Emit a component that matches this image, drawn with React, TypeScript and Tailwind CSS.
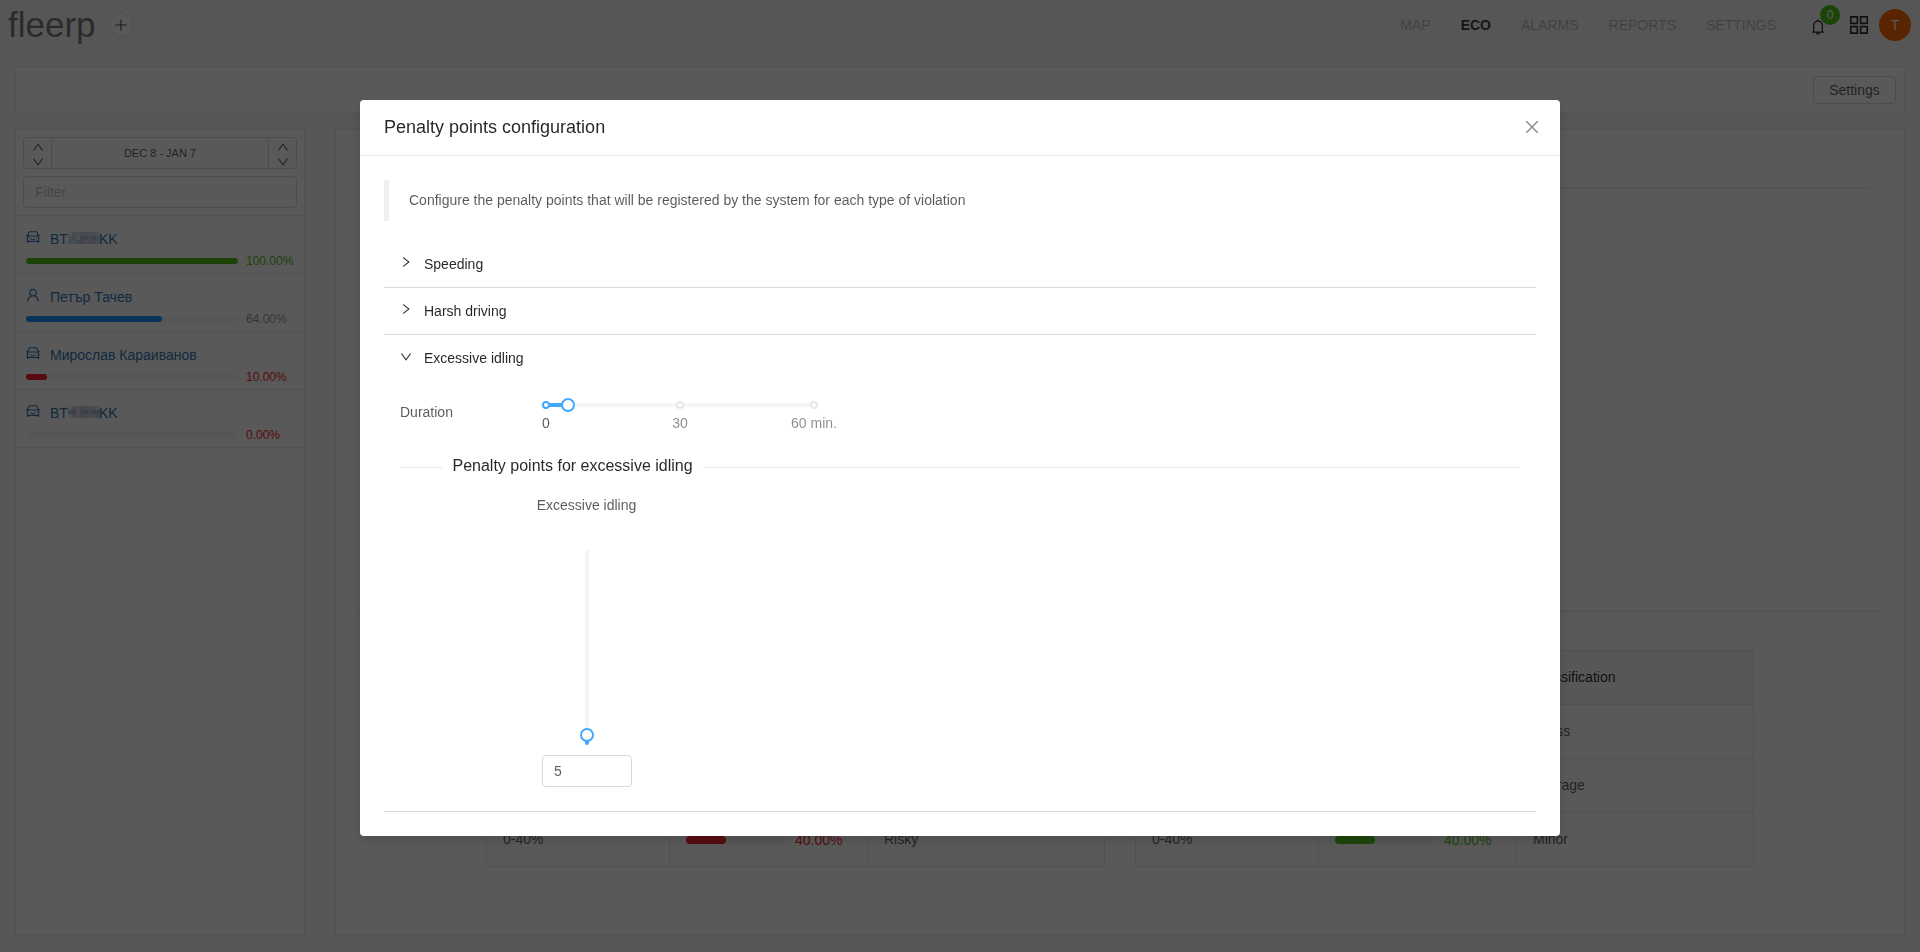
import React from "react";
import {
  AiOutlineAppstore,
  AiOutlineBell,
  AiOutlineCar,
  AiOutlineClose,
  AiOutlineDown,
  AiOutlinePlus,
  AiOutlineRight,
  AiOutlineUp,
  AiOutlineUser,
} from "react-icons/ai";

type Tone = "good" | "normal" | "bad";

// Trims the empty margin around the glyphs.
const tight = "64 64 896 896";

const fillTone: Record<Tone, string> = {
  good: "bg-[#52c41a]",
  normal: "bg-[#1890ff]",
  bad: "bg-[#f5222d]",
};

const textTone: Record<Tone, string> = {
  good: "text-[#52c41a]",
  normal: "text-black/45",
  bad: "text-[#f5222d]",
};

function Header() {
  const items = ["MAP", "ECO", "ALARMS", "REPORTS", "SETTINGS"];
  return (
    <header className="flex h-[51px] items-center border-b border-[#e8e8e8] bg-[#f5f5f5] pl-2 pr-[9px]">
      <div className="text-[35px] leading-[50px] text-black/50">fleerp</div>
      <button className="ml-[13.5px] flex size-6 items-center justify-center rounded-full border border-dashed border-[#d9d9d9] bg-white text-sm text-black/65">
        <AiOutlinePlus viewBox={tight} />
      </button>
      <nav className="ml-auto flex gap-[30px] text-sm">
        {items.map((item) => (
          <a key={item} className={item === "ECO" ? "font-bold text-black/75" : "text-black/25"}>
            {item}
          </a>
        ))}
      </nav>
      <div className="relative ml-[34px] mt-1 text-base text-black/80">
        <AiOutlineBell viewBox={tight} />
        <span className="absolute -top-[14px] left-[10px] flex size-5 items-center justify-center rounded-full bg-[#52c41a] text-xs text-white">
          0
        </span>
      </div>
      <AiOutlineAppstore viewBox={tight} className="ml-[22px] size-[22px] text-black/80" />
      <div className="ml-[9px] flex size-8 items-center justify-center rounded-full bg-[#ff6a00] text-sm text-white">
        T
      </div>
    </header>
  );
}

const firstPlate: string[][] = [
  ["bg-[#eef1f6]", "bg-[#d3dbe6]", "bg-[#d8dfe9]", "bg-[#ccd6e3]", "bg-[#c8d3e1]", "bg-[#cfd9e5]", "bg-[#d6dee8]", "bg-[#e2e7ee]"],
  ["bg-[#d6dfe9]", "bg-[#c3cfdd]", "bg-[#e2e8ef]", "bg-[#b8c7d9]", "bg-[#b0c1d5]", "bg-[#c0ceed]", "bg-[#b0c1d5]", "bg-[#c8d3e1]"],
  ["bg-[#c8d3e1]", "bg-[#d4dce6]", "bg-[#c6d1df]", "bg-[#c0ccdb]", "bg-[#cfd8e3]", "bg-[#c0ccdb]", "bg-[#c6d1df]", "bg-[#d4dce6]"],
];

const secondPlate: string[][] = [
  ["bg-[#eef1f6]", "bg-[#ccd6e3]", "bg-[#d3dbe6]", "bg-[#c3cfdd]", "bg-[#c8d3e1]", "bg-[#cfd9e5]", "bg-[#ccd6e3]", "bg-[#dbe2ea]"],
  ["bg-[#b4c4d7]", "bg-[#9fb4cc]", "bg-[#d3dbe6]", "bg-[#b8c7d9]", "bg-[#a8bbd1]", "bg-[#c3cfdd]", "bg-[#9fb4cc]", "bg-[#a8bbd1]"],
  ["bg-[#e8edf3]", "bg-[#c6d1df]", "bg-[#cfd8e3]", "bg-[#c0ccdb]", "bg-[#c8d3e1]", "bg-[#c6d1df]", "bg-[#d4dce6]", "bg-[#c0ccdb]"],
];

function Plate({ shades }: { shades: string[][] }) {
  return (
    <span className="inline-flex items-end">
      BT
      <span className="-mr-px mb-[6px] flex w-8 flex-col">
        {shades.map((row, r) => (
          <span key={r} className="flex">
            {row.map((shade, c) => (
              <span key={c} className={`size-1 ${shade}`} />
            ))}
          </span>
        ))}
      </span>
      KK
    </span>
  );
}

function ScoreRow({
  icon,
  name,
  value,
  tone,
}: {
  icon: React.ReactNode;
  name: React.ReactNode;
  value: number;
  tone: Tone;
}) {
  return (
    <li className="h-[58px] border-b border-[#e8e8e8] pl-[10px] pt-[13px]">
      <div className="flex h-[21px] text-sm leading-[21px] text-[#3278b4]">
        <span className="w-6 pt-[1px]">{icon}</span>
        <span>{name}</span>
      </div>
      <div className="mt-[2px] flex h-[18px] items-center">
        <div className="h-1.5 w-[212px] rounded-full bg-[#f5f5f5]">
          <div className={`h-1.5 rounded-full ${fillTone[tone]}`} style={{ width: `${value}%` }} />
        </div>
        <span className={`ml-2 text-xs leading-[18px] ${textTone[tone]}`}>{value.toFixed(2)}%</span>
      </div>
    </li>
  );
}

function Stepper() {
  return (
    <div className="flex w-[27px] flex-col items-center gap-[3px] pt-[3px] text-[12px] text-black/65">
      <AiOutlineUp viewBox={tight} />
      <AiOutlineDown viewBox={tight} />
    </div>
  );
}

function Sidebar() {
  return (
    <aside className="w-[290px] border border-[#e8e8e8] bg-white">
      <div className="px-[7px] pt-[7px]">
        <div className="flex h-8 rounded border border-[#d9d9d9]">
          <Stepper />
          <div className="flex-1 border-x border-[#d9d9d9] text-center text-[11px] leading-[31px] text-black/65">
            DEC 8 - JAN 7
          </div>
          <Stepper />
        </div>
        <div className="mt-[7px] h-8 rounded border border-[#d9d9d9] pl-[11px] text-sm leading-[30px] text-black/25">
          Filter
        </div>
      </div>
      <ul className="mt-[7px] border-t border-[#e8e8e8]">
        <ScoreRow icon={<AiOutlineCar viewBox={tight} />} name={<Plate shades={firstPlate} />} value={100} tone="good" />
        <ScoreRow icon={<AiOutlineUser viewBox={tight} />} name="Петър Тачев" value={64} tone="normal" />
        <ScoreRow icon={<AiOutlineCar viewBox={tight} />} name="Мирослав Караиванов" value={10} tone="bad" />
        <ScoreRow icon={<AiOutlineCar viewBox={tight} />} name={<Plate shades={secondPlate} />} value={0} tone="bad" />
      </ul>
    </aside>
  );
}

interface Level {
  range: string;
  value: number;
  fill: string;
  text: string;
  label: string;
}

const safety: Level[] = [
  { range: "80-100%", value: 100, fill: "bg-[#52c41a]", text: "text-[#52c41a]", label: "Safe" },
  { range: "40-80%", value: 80, fill: "bg-[#1890ff]", text: "text-black/45", label: "Average" },
  { range: "0-40%", value: 40, fill: "bg-[#f5222d]", text: "text-[#f5222d]", label: "Risky" },
];

const severity: Level[] = [
  { range: "80-100%", value: 100, fill: "bg-[#f5222d]", text: "text-[#f5222d]", label: "Gross" },
  { range: "40-80%", value: 80, fill: "bg-[#1890ff]", text: "text-black/45", label: "Average" },
  { range: "0-40%", value: 40, fill: "bg-[#52c41a]", text: "text-[#52c41a]", label: "Minor" },
];

function LevelTable({ levels }: { levels: Level[] }) {
  const cell = "flex items-center border-b border-r border-[#e8e8e8] px-4";
  return (
    <div className="grid w-[619px] grid-cols-[183px_198px_237px] grid-rows-[54px_54px_54px_54px] border-l border-t border-[#e8e8e8] text-sm text-black/65">
      <div className={`${cell} bg-[#fafafa] pb-0.5 text-black/85`}>Range</div>
      <div className={`${cell} bg-[#fafafa] pb-0.5 text-black/85`}>Points</div>
      <div className={`${cell} bg-[#fafafa] pb-0.5 text-black/85`}>Classification</div>
      {levels.map((level) => (
        <React.Fragment key={level.range}>
          <div className={`${cell} pb-0.5`}>{level.range}</div>
          <div className={cell}>
            <div className="h-2 w-[101px] rounded-full bg-[#f5f5f5]">
              <div className={`h-2 rounded-full ${level.fill}`} style={{ width: `${level.value}%` }} />
            </div>
            <span className={`ml-2 pt-px ${level.text}`}>{level.value.toFixed(2)}%</span>
          </div>
          <div className={`${cell} pb-0.5`}>{level.label}</div>
        </React.Fragment>
      ))}
    </div>
  );
}

function Dashboard() {
  return (
    <main className="flex h-[952px] flex-col overflow-hidden bg-[#f5f5f5]">
      <Header />
      <div className="mx-[15px] mt-[15px] flex h-12 items-center justify-end border border-[#e8e8e8] bg-white pr-2">
        <button className="h-7 w-[83px] rounded border border-[#d9d9d9] bg-white text-sm text-black/65">
          Settings
        </button>
      </div>
      <div className="mx-[15px] mt-[15px] flex h-[806px] gap-[30px]">
        <Sidebar />
        <section className="flex flex-1 flex-col border border-[#e8e8e8] bg-white">
          <div className="mx-[35px] mt-[57px] h-[2px] bg-[#f0f0f0]" />
          <div className="mx-[20px] mt-[421px] h-[2px] bg-[#f0f0f0]" />
          <div className="mt-[38px] flex gap-[30px] pl-[150px]">
            <LevelTable levels={safety} />
            <LevelTable levels={severity} />
          </div>
        </section>
      </div>
    </main>
  );
}

function PanelHeader({ title, open }: { title: string; open?: boolean }) {
  return (
    <div className="flex h-[46px] items-start pl-4 pt-3 text-black/85">
      <span className={open ? "w-6 pt-1 text-[12px]" : "w-6 pt-[3px] text-[12px]"}>
        {open ? <AiOutlineDown viewBox={tight} /> : <AiOutlineRight viewBox={tight} />}
      </span>
      <span className="text-sm leading-[22px]">{title}</span>
    </div>
  );
}

function DurationSlider() {
  const dot = "absolute -top-[2px] size-2 rounded-full border-2 bg-white";
  const mark = "absolute top-[10px] -translate-x-1/2 whitespace-nowrap text-sm leading-[21px]";
  return (
    <div className="relative mt-px h-1 w-[268px] rounded-full bg-[#f5f5f5]">
      <div className="h-1 w-[22px] bg-[#40a9ff]" />
      <span className={`${dot} -left-1 border-[#40a9ff]`} />
      <span className={`${dot} left-[130px] border-[#e8e8e8]`} />
      <span className={`${dot} left-[264px] border-[#e8e8e8]`} />
      <span className="absolute -top-[5px] left-[15px] size-[14px] rounded-full border-2 border-[#40a9ff] bg-white" />
      <span className={`${mark} left-0 text-black/65`}>0</span>
      <span className={`${mark} left-[134px] text-black/45`}>30</span>
      <span className={`${mark} left-[268px] text-black/45`}>60 min.</span>
    </div>
  );
}

function PointsSlider() {
  return (
    <div className="flex w-[106px] flex-col items-center">
      <span className="mr-px text-sm leading-[21px] text-black/65">Excessive idling</span>
      <div className="relative mt-[34px] flex h-[195px] w-1 items-end rounded-full bg-[#f5f5f5]">
        <div className="h-[10px] w-1 rounded-b-full bg-[#40a9ff]" />
        <span className="absolute -left-[5px] top-[178px] size-[14px] rounded-full border-2 border-[#40a9ff] bg-white" />
      </div>
      <div className="mt-[10px] h-8 w-[90px] rounded border border-[#d9d9d9] pl-[11px] text-sm leading-[30px] text-black/65">
        5
      </div>
    </div>
  );
}

function PenaltyModal() {
  return (
    <div className="fixed inset-0 flex items-start justify-center bg-black/65 pt-[100px]">
      <div className="h-[736px] w-[1200px] rounded bg-white shadow-[0_4px_12px_rgba(0,0,0,0.15)]">
        <div className="flex h-14 items-center justify-between border-b border-[#e8e8e8] pb-0.5 pl-6 pr-5">
          <h2 className="text-[18px] leading-[24px] text-black/85">Penalty points configuration</h2>
          <AiOutlineClose viewBox={tight} className="size-4 text-black/45" />
        </div>
        <div className="px-6 pt-6">
          <div className="h-[41px] border-l-[5px] border-[#f0f0f0] pl-5 text-sm leading-[41px] text-black/65">
            Configure the penalty points that will be registered by the system for each type of violation
          </div>
          <div className="mt-5">
            <div className="border-b border-[#d9d9d9]">
              <PanelHeader title="Speeding" />
            </div>
            <div className="border-b border-[#d9d9d9]">
              <PanelHeader title="Harsh driving" />
            </div>
            <div className="h-[477px] border-b border-[#d9d9d9]">
              <PanelHeader title="Excessive idling" open />
              <div className="flex px-4 pt-[21px]">
                <span className="w-[146px] text-sm leading-[21px] text-black/65">Duration</span>
                <DurationSlider />
              </div>
              <div className="mt-[31px] flex items-center px-4">
                <div className="mt-[3px] h-px w-[42px] bg-[#e8e8e8]" />
                <h3 className="pl-[10.5px] pr-[10px] text-base leading-6 text-black/85">
                  Penalty points for excessive idling
                </h3>
                <div className="mt-[3px] h-px flex-1 bg-[#e8e8e8]" />
              </div>
              <div className="mt-[17px] pl-[150px]">
                <PointsSlider />
              </div>
            </div>
          </div>
        </div>
      </div>
    </div>
  );
}

export default function App() {
  return (
    <div className="font-['Liberation_Sans',Arial,sans-serif]">
      <Dashboard />
      <PenaltyModal />
    </div>
  );
}
